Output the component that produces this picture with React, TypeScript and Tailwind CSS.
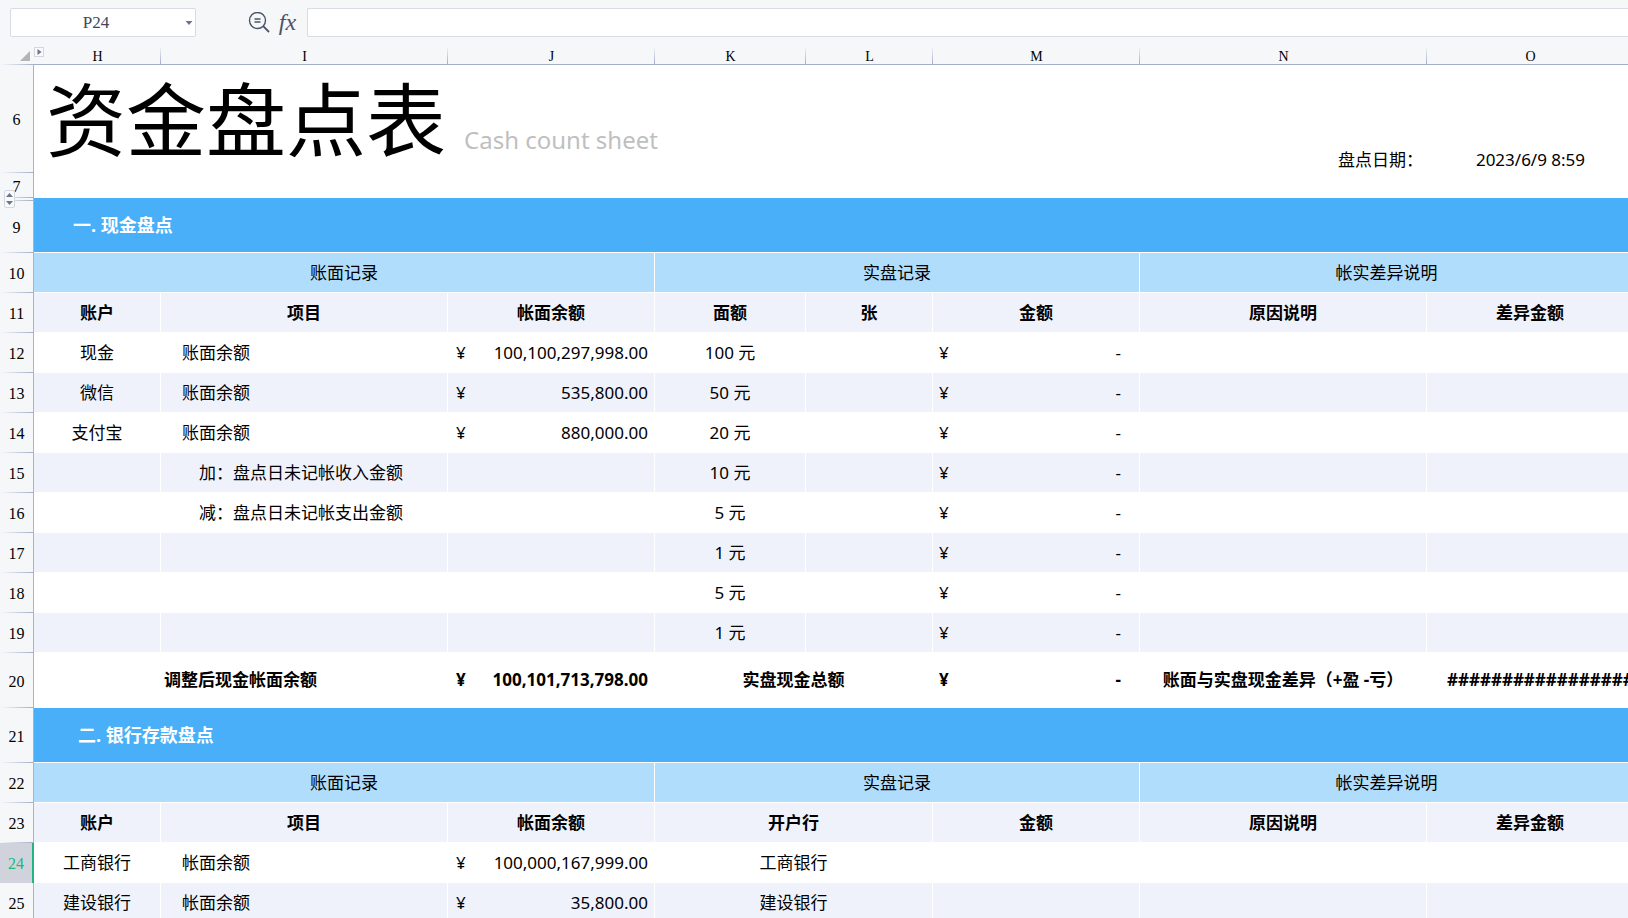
import clsx from "clsx"
import React, { useState } from "react"

interface CashRow {
    no: number
    account?: string
    item?: string
    indent?: boolean
    amount?: string
    face: string
}

interface BankRow {
    no: number
    account: string
    amount: string
}

const COLUMNS = ["H", "I", "J", "K", "L", "M", "N", "O"]

const CASH_ROWS: CashRow[] = [
    { no: 12, account: "现金", item: "账面余额", amount: "100,100,297,998.00", face: "100 元" },
    { no: 13, account: "微信", item: "账面余额", amount: "535,800.00", face: "50 元" },
    { no: 14, account: "支付宝", item: "账面余额", amount: "880,000.00", face: "20 元" },
    { no: 15, item: "加：盘点日未记帐收入金额", indent: true, face: "10 元" },
    { no: 16, item: "减：盘点日未记帐支出金额", indent: true, face: "5 元" },
    { no: 17, face: "1 元" },
    { no: 18, face: "5 元" },
    { no: 19, face: "1 元" },
]

const BANK_ROWS: BankRow[] = [
    { no: 24, account: "工商银行", amount: "100,000,167,999.00" },
    { no: 25, account: "建设银行", amount: "35,800.00" },
]

const SELECTED_ROW = 24

const RowHead = ({ no }: { no?: number }) => (
    <th
        scope="row"
        className={clsx(
            "p-0 text-center font-['Liberation_Serif','Noto_Sans_CJK_SC',serif] text-base leading-4 font-normal",
            no !== undefined && "pt-0.5",
            no === SELECTED_ROW
                ? "border-r-2 border-[#21b67f] bg-[#d0d3db] text-[#21b67f]"
                : "border-r border-[#aab2cb] bg-[#f6f7f9] bg-[linear-gradient(to_right,transparent,#a3aec8)] bg-[length:100%_1px] bg-bottom bg-no-repeat"
        )}
    >
        {no}
    </th>
)

interface CellProps {
    shaded?: boolean
    className?: string
    colSpan?: number
    children?: React.ReactNode
}

const Cell = ({ shaded, className, colSpan, children }: CellProps) => (
    <td
        colSpan={colSpan}
        className={clsx(
            "overflow-hidden border-r border-b border-white p-0 whitespace-nowrap",
            shaded && "bg-[#eff2fb]",
            className
        )}
    >
        {children}
    </td>
)

const Money = ({ value }: { value: string }) => (
    <div className={clsx("flex justify-between", value === "-" ? "pr-[18px] pl-1.5" : "pr-1.5 pl-2")}>
        <span>¥</span>
        <span>{value}</span>
    </div>
)

const SectionRow = ({ no, title, className }: { no: number; title: string; className: string }) => (
    <tr className={className}>
        <RowHead no={no} />
        <td
            colSpan={8}
            className={clsx(
                "border-b border-white bg-[#48aff8] p-0 text-lg leading-6 font-bold text-white",
                no === 9 ? "pb-1 pl-[39px]" : "pb-px pl-11"
            )}
        >
            {title}
        </td>
    </tr>
)

const GroupRow = ({ no }: { no: number }) => (
    <tr className="h-10 text-center">
        <RowHead no={no} />
        <Cell colSpan={3} className="bg-[#b1ddfd]">账面记录</Cell>
        <Cell colSpan={3} className="bg-[#b1ddfd]">实盘记录</Cell>
        <Cell colSpan={2} className="bg-[#b1ddfd]">帐实差异说明</Cell>
    </tr>
)

const App: React.FC = () => {
    const [cellName, setCellName] = useState("P24")
    const [formula, setFormula] = useState("")

    return (
        <div className="flex h-screen flex-col overflow-hidden bg-white font-['Noto_Sans','Noto_Sans_CJK_SC',sans-serif] text-[17px] leading-6 text-black">

            {/* FORMULA BAR */}
            <div className="flex h-[46px] shrink-0 items-center bg-[#f6f7f9] pb-px pl-2.5">
                <div className="flex h-[29px] w-[186px] items-center rounded-xs border border-[#d8dbe1] bg-white">
                    <input
                        aria-label="名称框"
                        value={cellName}
                        onChange={e => setCellName(e.target.value)}
                        className="min-w-0 flex-1 bg-transparent pr-1 text-center font-['Liberation_Serif',serif] text-[17px] text-[#3f4757] outline-none"
                    />
                    <button type="button" aria-label="选择名称" className="flex h-full w-2.5 items-center">
                        <svg width="8" height="4" viewBox="0 0 8 4" fill="#6b7689">
                            <path d="M0.5 0h7L4 4z" />
                        </svg>
                    </button>
                </div>

                <button type="button" aria-label="查找" className="ml-[52px]">
                    <svg width="22" height="22" viewBox="0 0 22 22" fill="none" stroke="#4a5469" strokeWidth="1.4">
                        <circle cx="9.5" cy="8.5" r="8" />
                        <path d="M15.2 14.2 21 20" strokeWidth="1.8" />
                        <path d="M6.5 7h6M6.5 10h6" strokeWidth="1.3" />
                    </svg>
                </button>
                <button
                    type="button"
                    aria-label="插入函数"
                    className="mr-1.5 ml-1 w-[27px] pb-0.5 text-center font-['Liberation_Serif',serif] text-2xl leading-7 text-[#4a5469] italic"
                >
                    fx
                </button>
                <input
                    aria-label="编辑栏"
                    value={formula}
                    onChange={e => setFormula(e.target.value)}
                    className="h-[29px] min-w-0 flex-1 rounded-l-xs border border-r-0 border-[#d8dbe1] bg-white px-2 outline-none"
                />
            </div>

            {/* SHEET */}
            <div className="relative min-h-0 flex-1 overflow-hidden">
                <table className="w-full min-w-[1634px] table-fixed border-separate border-spacing-0">
                    <colgroup>
                        <col className="w-[34px]" />
                        <col className="w-[127px]" />
                        <col className="w-[287px]" />
                        <col className="w-[207px]" />
                        <col className="w-[151px]" />
                        <col className="w-[127px]" />
                        <col className="w-[207px]" />
                        <col className="w-[287px]" />
                        <col />
                    </colgroup>
                    <thead>
                        <tr className="h-[19px] bg-[#f6f7f9]">
                            <td className="bg-[linear-gradient(to_right,transparent,#a3aec8)] bg-[length:100%_1px] bg-bottom bg-no-repeat p-0">
                                <svg className="ml-5 block" width="10" height="10" viewBox="0 0 10 10" fill="#b4b4b6">
                                    <path d="M10 0v10H0z" />
                                </svg>
                            </td>
                            {COLUMNS.map(c => (
                                <th
                                    key={c}
                                    scope="col"
                                    className="border-b border-[#a3aec8] bg-[linear-gradient(to_bottom,transparent,#a3aec8)] bg-[length:1px_100%] bg-right bg-no-repeat p-0 pt-1 text-center font-['Liberation_Serif',serif] text-sm leading-[14px] font-normal"
                                >
                                    {c}
                                </th>
                            ))}
                        </tr>
                    </thead>
                    <tbody>
                        <tr className="h-[108px]">
                            <RowHead no={6} />
                            <td colSpan={6} className="p-0 pl-3">
                                <div className="flex items-end gap-[18px] whitespace-nowrap">
                                    <h1 className="text-[80px] leading-[106px]">资金盘点表</h1>
                                    <span className="pb-4 text-2xl text-[#bfbfbf]">Cash count sheet</span>
                                </div>
                            </td>
                            <td className="p-0 pr-1 pb-px text-right align-bottom">盘点日期：</td>
                            <td className="p-0 pb-px text-center align-bottom">2023/6/9 8:59</td>
                        </tr>
                        <tr className="h-[25px]">
                            <RowHead no={7} />
                            <td colSpan={8} className="p-0" />
                        </tr>

                        {/* 现金盘点 */}
                        <tr className="h-[3px]">
                            <RowHead />
                            <td colSpan={8} className="bg-[#48aff8] p-0" />
                        </tr>
                        <SectionRow no={9} title="一. 现金盘点" className="h-[52px]" />
                        <GroupRow no={10} />
                        <tr className="h-10 text-center font-bold">
                            <RowHead no={11} />
                            {["账户", "项目", "帐面余额", "面额", "张", "金额", "原因说明", "差异金额"].map(t => (
                                <Cell key={t} shaded>{t}</Cell>
                            ))}
                        </tr>
                        {CASH_ROWS.map(r => {
                            const shaded = r.no % 2 === 1
                            return (
                                <tr key={r.no} className="h-10">
                                    <RowHead no={r.no} />
                                    <Cell shaded={shaded} className="text-center">{r.account}</Cell>
                                    <Cell shaded={shaded} className={r.indent ? "pl-[38px]" : "pl-[21px]"}>{r.item}</Cell>
                                    <Cell shaded={shaded}>{r.amount && <Money value={r.amount} />}</Cell>
                                    <Cell shaded={shaded} className="text-center">{r.face}</Cell>
                                    <Cell shaded={shaded} />
                                    <Cell shaded={shaded}><Money value="-" /></Cell>
                                    <Cell shaded={shaded} />
                                    <Cell shaded={shaded} />
                                </tr>
                            )
                        })}
                        <tr className="h-[55px] font-bold">
                            <RowHead no={20} />
                            <Cell colSpan={2} className="text-center">调整后现金帐面余额</Cell>
                            <Cell><Money value="100,101,713,798.00" /></Cell>
                            <Cell colSpan={2} className="text-center">实盘现金总额</Cell>
                            <Cell><Money value="-" /></Cell>
                            <Cell className="text-center">账面与实盘现金差异（+盈 -亏）</Cell>
                            <Cell className="pl-5">####################</Cell>
                        </tr>

                        {/* 银行存款盘点 */}
                        <SectionRow no={21} title="二. 银行存款盘点" className="h-[55px]" />
                        <GroupRow no={22} />
                        <tr className="h-10 text-center font-bold">
                            <RowHead no={23} />
                            <Cell shaded>账户</Cell>
                            <Cell shaded>项目</Cell>
                            <Cell shaded>帐面余额</Cell>
                            <Cell shaded colSpan={2}>开户行</Cell>
                            <Cell shaded>金额</Cell>
                            <Cell shaded>原因说明</Cell>
                            <Cell shaded>差异金额</Cell>
                        </tr>
                        {BANK_ROWS.map(r => {
                            const shaded = r.no % 2 === 1
                            return (
                                <tr key={r.no} className="h-10">
                                    <RowHead no={r.no} />
                                    <Cell shaded={shaded} className="text-center">{r.account}</Cell>
                                    <Cell shaded={shaded} className="pl-[21px]">帐面余额</Cell>
                                    <Cell shaded={shaded}><Money value={r.amount} /></Cell>
                                    <Cell shaded={shaded} colSpan={2} className="text-center">{r.account}</Cell>
                                    <Cell shaded={shaded} />
                                    <Cell shaded={shaded} />
                                    <Cell shaded={shaded} />
                                </tr>
                            )
                        })}
                    </tbody>
                </table>

                {/* hidden column / row expanders */}
                <button
                    type="button"
                    aria-label="展开隐藏列"
                    className="absolute top-px left-[34px] flex h-2.5 w-2.5 items-center justify-center border border-[#d4d7de] bg-[#f9fafb]"
                >
                    <svg width="5" height="6" viewBox="0 0 5 6" fill="#6b7689">
                        <path d="M0.5 0v6L4.5 3z" />
                    </svg>
                </button>
                <button
                    type="button"
                    aria-label="展开隐藏行"
                    className="absolute top-36 left-1 flex h-[18px] w-[11px] flex-col items-center justify-center rounded-xs border border-[#d4d7de] bg-[#f9fafb]"
                >
                    <svg width="7" height="12" viewBox="0 0 7 12" fill="#6b7689">
                        <path d="M3.5 0 7 4H0zM3.5 12 0 8h7z" />
                    </svg>
                </button>
            </div>

        </div>
    )
}

export default App
